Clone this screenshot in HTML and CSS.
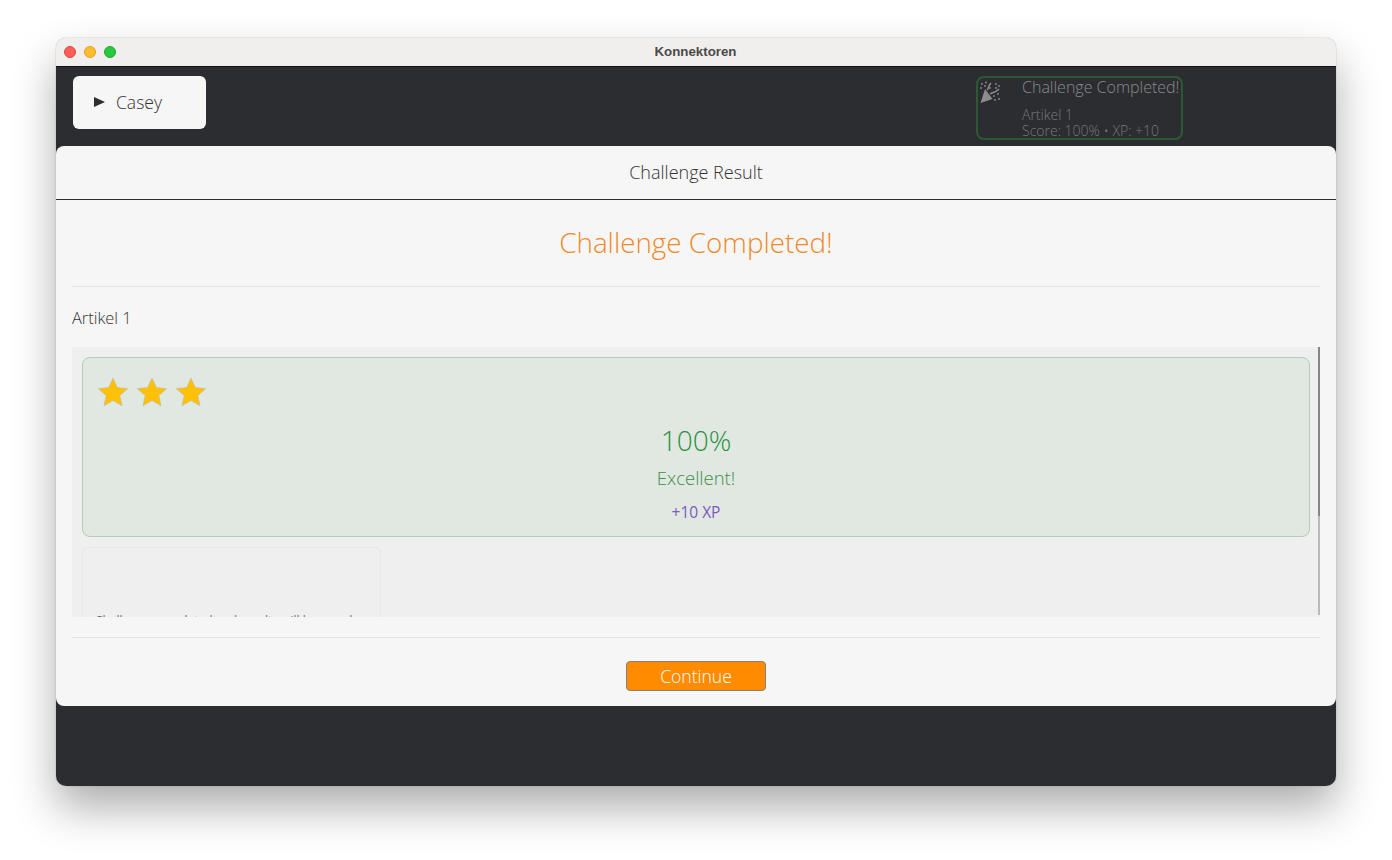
FILE: index.html
```html
<!DOCTYPE html>
<html lang="en">
<head>
    <meta charset="UTF-8">
    <title>Konnektoren</title>
    <link rel="stylesheet" href="styles.css">
</head>
<body>
    <div class="window">
        <div class="titlebar">
            <div class="lights">
                <span class="light red"></span>
                <span class="light yellow"></span>
                <span class="light green"></span>
            </div>
            <div class="window-title">Konnektoren</div>
        </div>
        <div class="app">
            <div class="topbar">
                <div class="profile">
                    <span class="arrow"></span>
                    <span>Casey</span>
                </div>
                <div class="toast">
                    <svg class="toast-icon" viewBox="0 0 24 24" width="24" height="24">
                        <path d="M0.500 22 L5 8 L12.500 18 Z" fill="#8c8c8c"/>
                        <path d="M7 9 C9 7 8 5 11 2 M10 13 C13 11 15 12 19 8" stroke="#8c8c8c" stroke-width="1.500" fill="none"/>
                        <g fill="#8c8c8c">
                            <circle cx="2" cy="3" r="0.900"/><circle cx="6" cy="1.500" r="0.900"/><circle cx="1" cy="7" r="0.900"/>
                            <circle cx="5" cy="5" r="0.900"/><circle cx="10" cy="7" r="0.900"/><circle cx="16" cy="3" r="0.900"/>
                            <circle cx="19" cy="5" r="0.900"/><circle cx="16" cy="7" r="0.900"/><circle cx="14" cy="15" r="0.900"/>
                            <circle cx="18" cy="13" r="0.900"/><circle cx="15" cy="19" r="0.900"/><circle cx="19" cy="18" r="0.900"/>
                        </g>
                    </svg>
                    <div class="toast-text">
                        <div class="toast-title">Challenge Completed!</div>
                        <div class="toast-line">Artikel 1</div>
                        <div class="toast-line">Score: 100% &bull; XP: +10</div>
                    </div>
                </div>
            </div>
            <div class="modal">
                <div class="modal-header">Challenge Result</div>
                <div class="modal-body">
                    <h2 class="result-title">Challenge Completed!</h2>
                    <div class="challenge-name">Artikel 1</div>
                    <div class="scroll-area">
                        <div class="score-card">
                            <div class="stars">
                                <svg viewBox="0 0 24 24" width="32" height="32"><path class="star" d="M12 1.5l3.2 7.2 7.8.8-5.9 5.2 1.7 7.7L12 18.4l-6.8 4 1.7-7.7L1 9.500l7.800-.8z"/></svg>
                                <svg viewBox="0 0 24 24" width="32" height="32"><path class="star" d="M12 1.5l3.2 7.2 7.8.8-5.9 5.2 1.7 7.7L12 18.4l-6.8 4 1.7-7.7L1 9.500l7.800-.8z"/></svg>
                                <svg viewBox="0 0 24 24" width="32" height="32"><path class="star" d="M12 1.5l3.2 7.2 7.8.8-5.9 5.2 1.7 7.7L12 18.4l-6.8 4 1.7-7.7L1 9.500l7.800-.8z"/></svg>
                            </div>
                            <div class="percent">100%</div>
                            <div class="verdict">Excellent!</div>
                            <div class="xp">+10 XP</div>
                        </div>
                        <div class="info-card">Challenge completed and results will be saved</div>
                        <div class="scroll-track"><div class="scroll-thumb"></div></div>
                    </div>
                    <div class="modal-footer">
                        <button class="continue-btn">Continue</button>
                    </div>
                </div>
            </div>
        </div>
    </div>
</body>
</html>
```

FILE: styles.css
```css
html, body {
    margin: 0;
    height: 860px;
    overflow: hidden;
    background: #ffffff;
    font-family: "Open Sans", "Noto Sans", sans-serif;
    font-weight: 300;
}
body {
    padding: 38px 56px 0;
    box-sizing: border-box;
}
.window {
    height: 748px;
    border-radius: 10px;
    overflow: hidden;
    box-shadow: 0 22px 44px rgba(0, 0, 0, 0.32), 0 0 1px rgba(0, 0, 0, 0.6);
    display: flex;
    flex-direction: column;
}
.titlebar {
    height: 28px;
    flex: none;
    background: #f0efed;
    border-bottom: 1px solid #111;
    display: flex;
    align-items: center;
    justify-content: center;
    position: relative;
}
.lights {
    position: absolute;
    left: 8px;
    top: 8px;
    display: flex;
    gap: 8px;
}
.light {
    width: 12px;
    height: 12px;
    border-radius: 50%;
    box-sizing: border-box;
}
.red { background: #ff5f57; border: 1px solid #e0443e; }
.yellow { background: #febc2e; border: 1px solid #dea123; }
.green { background: #28c840; border: 1px solid #1aab29; }
.window-title {
    font-family: "Liberation Sans", sans-serif;
    font-size: 13.300px;
    font-weight: 700;
    color: #4a4a4a;
    padding: 0 1px 2px 0;
}
.app {
    flex: 1;
    background: #2c2d31;
    display: flex;
    flex-direction: column;
}
.topbar {
    height: 79px;
    flex: none;
    display: flex;
    align-items: flex-start;
    justify-content: space-between;
    padding: 9px 153px 0 17px;
    box-sizing: border-box;
}
.profile {
    width: 133px;
    height: 53px;
    box-sizing: border-box;
    background: #f6f6f6;
    border-radius: 6px;
    display: flex;
    align-items: center;
    padding: 0 0 1px 21px;
    gap: 11px;
    font-size: 17.500px;
    color: #333333;
}
.arrow {
    width: 0;
    height: 0;
    border-left: 11px solid #2c2d31;
    border-top: 5px solid transparent;
    border-bottom: 5px solid transparent;
}
.toast {
    width: 207px;
    height: 64px;
    box-sizing: border-box;
    border: 2px solid #2a5a34;
    border-radius: 8px;
    display: flex;
    gap: 18px;
    padding: 0 0 0 2px;
    color: #8a8a8a;
    white-space: nowrap;
}
.toast-icon { flex: none; margin-top: 3px; }
.toast-title {
    font-size: 16px;
    line-height: 18px;
    margin-bottom: 11px;
}
.toast-line {
    font-size: 14px;
    line-height: 16px;
    color: #777777;
}
.modal {
    height: 560px;
    flex: none;
    background: #f6f6f6;
    border-radius: 8px;
    display: flex;
    flex-direction: column;
}
.modal-header {
    height: 54px;
    flex: none;
    box-sizing: border-box;
    border-bottom: 1px solid #2c2d31;
    padding-bottom: 2px;
    display: flex;
    align-items: center;
    justify-content: center;
    font-size: 18px;
    color: #333333;
}
.modal-body {
    padding: 0 16px;
}
.result-title {
    margin: 0;
    height: 87px;
    box-sizing: border-box;
    border-bottom: 1px solid #e4e4e4;
    padding-bottom: 2px;
    display: flex;
    align-items: center;
    justify-content: center;
    font-size: 27.800px;
    font-weight: 300;
    color: #ee8a2c;
}
.challenge-name {
    height: 60px;
    box-sizing: border-box;
    display: flex;
    align-items: center;
    font-size: 16.400px;
    color: #333333;
}
.scroll-area {
    height: 270px;
    background: #efefef;
    padding: 10px;
    box-sizing: border-box;
    overflow: hidden;
    position: relative;
}
.scroll-track {
    position: absolute;
    top: 0;
    right: 0;
    width: 2px;
    height: 268px;
    background: #b9b9b9;
}
.scroll-thumb {
    height: 169px;
    background: #858585;
}
.score-card {
    height: 180px;
    box-sizing: border-box;
    background: #e0e8e1;
    border: 1px solid #aecfb2;
    border-radius: 8px;
    padding: 18px 14px 0;
    text-align: center;
}
.stars {
    display: flex;
    gap: 7px;
    height: 40px;
}
.star {
    fill: #ffc107;
    stroke: #b9b5a5;
    stroke-width: 0.4;
}
.percent {
    margin-top: 7px;
    font-size: 28px;
    line-height: 34px;
    color: #2e9142;
}
.verdict {
    margin-top: 9px;
    font-size: 18.500px;
    line-height: 24px;
    color: #3f8f4c;
}
.xp {
    margin-top: 12px;
    font-size: 15.500px;
    line-height: 20px;
    font-weight: 400;
    color: #7e57c2;
}
.info-card {
    margin-top: 10px;
    width: 299px;
    height: 120px;
    box-sizing: border-box;
    border: 1px solid #e8e8e8;
    border-radius: 6px;
    padding: 64px 12px 0;
    font-size: 12px;
    font-weight: 400;
    color: #6b6b80;
    white-space: nowrap;
    overflow: hidden;
}
.modal-footer {
    margin-top: 20px;
    border-top: 1px solid #e4e4e4;
    display: flex;
    justify-content: center;
    padding-top: 23px;
}
.continue-btn {
    width: 140px;
    height: 30px;
    background: #ff8c00;
    border: 1px solid #8a7f70;
    border-radius: 4px;
    color: #ffffff;
    font-family: inherit;
    font-weight: 300;
    font-size: 17.500px;
    padding: 0 0 1px;
}
```
